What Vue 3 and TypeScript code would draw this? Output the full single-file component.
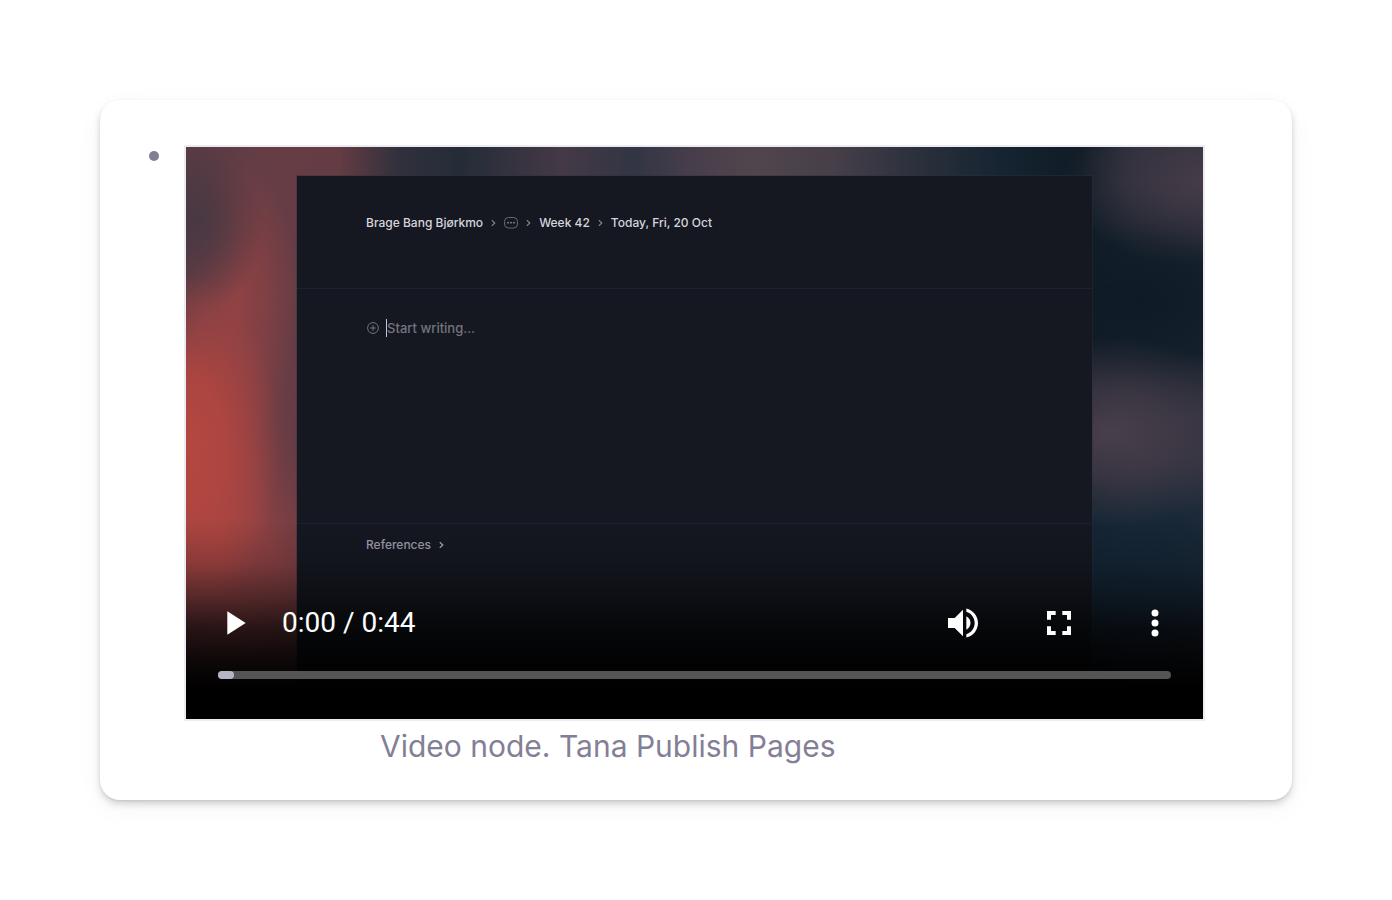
<script setup lang="ts">
import { ref } from 'vue'

const position = ref(0)
const draft = ref('')
const currentTime = '0:00'
const duration = '0:44'
</script>

<template>
  <main class="page">
    <article class="card">
      <span class="bullet" aria-hidden="true"></span>
      <figure class="node">
        <div class="player">
          <div class="scene">
            <section class="panel">
              <nav class="crumbs" aria-label="Breadcrumb">
                <a href="#">Brage Bang Bjørkmo</a>
                <svg class="chevron" viewBox="0 0 5 8"><path d="M0.8 1.2 3.8 4 0.8 6.8" /></svg>
                <button class="more" type="button" aria-label="Show path">
                  <svg viewBox="0 0 14 12">
                    <rect x="0.5" y="0.5" width="13" height="10.5" rx="4" />
                    <circle cx="4" cy="5.7" r="0.9" /><circle cx="7" cy="5.7" r="0.9" /><circle cx="10" cy="5.7" r="0.9" />
                  </svg>
                </button>
                <svg class="chevron" viewBox="0 0 5 8"><path d="M0.8 1.2 3.8 4 0.8 6.8" /></svg>
                <a href="#">Week 42</a>
                <svg class="chevron" viewBox="0 0 5 8"><path d="M0.8 1.2 3.8 4 0.8 6.8" /></svg>
                <a href="#">Today, Fri, 20 Oct</a>
              </nav>
              <div class="editor">
                <label class="line">
                  <svg class="plus" viewBox="0 0 12 12"><circle cx="6" cy="6" r="5.4" /><path d="M6 3.2v5.6M3.2 6h5.6" /></svg>
                  <span class="caret"></span>
                  <input v-model="draft" type="text" placeholder="Start writing..." aria-label="Node text" />
                </label>
              </div>
              <button class="references" type="button">
                References
                <svg class="chevron bright" viewBox="0 0 5 8"><path d="M0.8 1.2 3.8 4 0.8 6.8" /></svg>
              </button>
            </section>
          </div>
          <div class="controls">
            <div class="buttons">
              <button type="button" aria-label="Play">
                <svg viewBox="0 0 24 24"><path d="M8 5v14l11-7z" /></svg>
              </button>
              <span class="time">{{ currentTime }} / {{ duration }}</span>
              <button type="button" aria-label="Mute">
                <svg viewBox="0 0 24 24">
                  <path d="M3 9v6h4l5 5V4L7 9H3zm13.5 3c0-1.77-1.02-3.29-2.5-4.03v8.05c1.48-.73 2.5-2.25 2.5-4.02zM14 3.23v2.06c2.89.86 5 3.54 5 6.71s-2.11 5.85-5 6.71v2.06c4.01-.91 7-4.49 7-8.77s-2.99-7.86-7-8.77z" />
                </svg>
              </button>
              <button type="button" aria-label="Full screen">
                <svg viewBox="0 0 24 24">
                  <path d="M7.2 14H4.8v5.2H10v-2.4H7.2V14zM4.8 10h2.4V7.2H10V4.8H4.8V10zm12 6.8H14v2.4h5.2V14h-2.4v2.8zM14 4.8v2.4h2.8V10h2.4V4.8H14z" />
                </svg>
              </button>
              <button type="button" aria-label="More options">
                <svg viewBox="0 0 24 24">
                  <circle cx="12" cy="6" r="2.1" /><circle cx="12" cy="12" r="2.1" /><circle cx="12" cy="18" r="2.1" />
                </svg>
              </button>
            </div>
            <input v-model.number="position" class="timeline" type="range" min="0" max="44" aria-label="Video position" />
          </div>
        </div>
        <figcaption>Video node. Tana Publish Pages</figcaption>
      </figure>
    </article>
  </main>
</template>

<style>
body {
  margin: 0;
  background: #fff;
}
</style>

<style scoped>
* {
  box-sizing: border-box;
}
.page {
  padding: 100px;
  font-family: Inter, "Liberation Sans", sans-serif;
}
button {
  margin: 0;
  padding: 0;
  border: 0;
  background: none;
  font: inherit;
  color: inherit;
  cursor: pointer;
}
.card {
  display: flex;
  align-items: flex-start;
  gap: 27px;
  padding: 47px 89px 34px 49px;
  border-radius: 20px;
  background: #fff;
  box-shadow:
    0 1px 2px rgba(0, 0, 0, 0.08),
    0 4px 7px rgba(0, 0, 0, 0.16),
    0 8px 28px rgba(0, 0, 0, 0.04);
}
.bullet {
  flex: none;
  width: 10px;
  height: 10px;
  margin-top: 4px;
  border-radius: 50%;
  background: #817d94;
}
.node {
  flex: 1;
  min-width: 0;
  margin: 0;
}
.player {
  display: grid;
  aspect-ratio: 16 / 9;
  overflow: hidden;
  box-shadow: 0 0 0 2px #ebebf1;
}
.scene,
.controls {
  grid-area: 1 / 1;
  min-width: 0;
  min-height: 0;
}
.scene {
  display: flex;
  padding: 29px 111px 0 111px;
  background:
    radial-gradient(ellipse 95px 170px at 0% 52%, #b54640 0%, rgba(181, 70, 64, 0.85) 40%, rgba(181, 70, 64, 0) 100%),
    radial-gradient(ellipse 70px 90px at 1% 13%, #483843 0%, rgba(73, 56, 66, 0.7) 40%, rgba(73, 56, 66, 0) 100%),
    radial-gradient(ellipse 60px 150px at 5% 27%, #904244 0%, rgba(144, 66, 68, 0.6) 50%, rgba(144, 66, 68, 0) 100%),
    radial-gradient(ellipse 60px 150px at 12% 50%, #603b44 0%, rgba(96, 59, 68, 0) 100%),
    radial-gradient(ellipse 150px 220px at 3% 68%, #a04443 0%, rgba(130, 62, 67, 0) 100%),
    radial-gradient(ellipse 140px 85px at 100% 6%, #463b47 0%, rgba(70, 59, 71, 0) 100%),
    radial-gradient(ellipse 150px 95px at 91% 50%, #493f4b 0%, rgba(70, 60, 72, 0.7) 45%, rgba(50, 50, 65, 0) 100%),
    radial-gradient(ellipse 170px 120px at 93% 74%, #142636 0%, rgba(20, 38, 54, 0.8) 50%, rgba(20, 38, 54, 0) 100%),
    radial-gradient(ellipse 190px 120px at 94% 27%, #0e1b26 0%, rgba(14, 27, 38, 0.8) 50%, rgba(14, 27, 38, 0) 100%),
    linear-gradient(90deg, #5c3c45 0%, #673d45 10%, #653c44 15%, #30303c 21%, #242c38 27%, #453946 37%, #323544 44%, #483e4b 50%, #51454d 56%, #463e49 64%, #2a303c 72%, #142330 81%, #101c26 88%, #252c38 93%, #2c313e 100%);
}
.panel {
  display: flex;
  flex: 1;
  flex-direction: column;
  min-width: 0;
  background: #151821;
  color: #d6d5dc;
  font-size: 12px;
  font-weight: 500;
  line-height: 20px;
  box-shadow: 0 0 0 1px rgba(45, 48, 60, 0.4);
}
.crumbs {
  display: flex;
  align-items: center;
  gap: 8px;
  height: 113px;
  padding: 0 69px 18px;
  white-space: nowrap;
  border-bottom: 1px solid #1f222e;
}
.crumbs a {
  color: inherit;
  text-decoration: none;
}
.chevron {
  flex: none;
  width: 5px;
  height: 8px;
  fill: none;
  stroke: #878791;
  stroke-width: 1.1;
}
.bright {
  stroke: #a9a8b3;
  stroke-width: 1.3;
}
.more {
  display: flex;
}
.more svg {
  width: 14px;
  height: 12px;
  stroke: #686873;
  fill: none;
}
.more circle {
  fill: #85858f;
  stroke: none;
}
.editor {
  height: 235px;
  padding: 29px 69px;
  font-size: 13px;
  border-bottom: 1px solid #1d202c;
}
.line {
  display: flex;
  align-items: center;
}
.plus {
  flex: none;
  width: 12px;
  height: 12px;
  margin: 0 7px 0 1px;
  fill: none;
  stroke: #74747e;
  stroke-width: 1;
}
.caret {
  width: 1px;
  height: 18px;
  background: #c9c5d8;
}
.line input {
  flex: 1;
  min-width: 0;
  padding: 0;
  border: 0;
  outline: 0;
  background: none;
  color: inherit;
  font: inherit;
}
.line input::placeholder {
  color: #74747d;
  opacity: 1;
}
.references {
  display: flex;
  align-items: center;
  align-self: flex-start;
  gap: 8px;
  padding: 11px 69px;
  color: #a09fac;
}
.controls {
  position: relative;
  display: flex;
  flex-direction: column;
  justify-content: flex-end;
  padding-bottom: 40px;
  background: linear-gradient(
    to top,
    #000 0,
    #000 30px,
    rgba(0, 0, 0, 0.88) 60px,
    rgba(0, 0, 0, 0.7) 90px,
    rgba(0, 0, 0, 0.4) 122px,
    rgba(0, 0, 0, 0.15) 155px,
    rgba(0, 0, 0, 0) 200px
  );
  color: #fff;
}
.buttons {
  display: flex;
  align-items: center;
}
.buttons button {
  display: grid;
  place-items: center;
  width: 96px;
  height: 96px;
}
.buttons svg {
  width: 40px;
  height: 40px;
  fill: currentColor;
}
.time {
  flex: 1;
  font-family: Roboto, "Liberation Sans", sans-serif;
  font-size: 28px;
  line-height: 32px;
}
.timeline {
  appearance: none;
  display: block;
  height: 8px;
  margin: 0 32px;
  border-radius: 4px;
  background: #545355;
  cursor: pointer;
}
.timeline::-webkit-slider-thumb {
  appearance: none;
  width: 16px;
  height: 8px;
  border-radius: 4px;
  background: #b8b5c3;
}
figcaption {
  padding: 7px 0 0 194px;
  color: #837f96;
  font-size: 30px;
  line-height: 40px;
}
</style>
